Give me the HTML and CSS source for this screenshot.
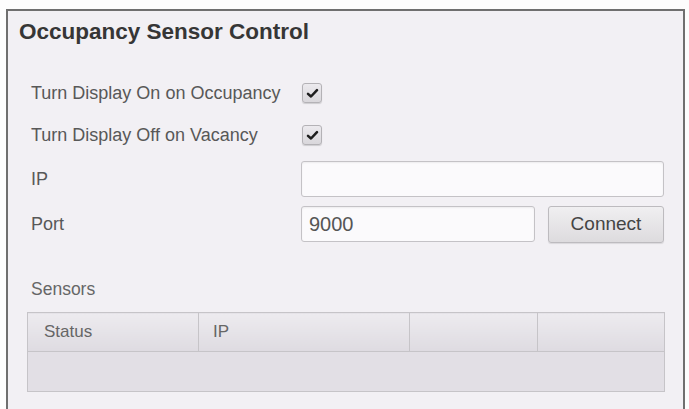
FILE: index.html
```html
<!DOCTYPE html>
<html lang="en">
<head>
    <meta charset="UTF-8">
    <title>Occupancy Sensor Control</title>
    <link rel="stylesheet" href="styles.css">
</head>
<body>
    <div class="panel">
        <h2 class="panel-title">Occupancy Sensor Control</h2>

        <div class="form">
            <div class="row row-check">
                <label class="label">Turn Display On on Occupancy</label>
                <span class="checkbox checked">
                    <svg viewBox="0 0 20 20" width="15" height="15"><path d="M4 10.5 L8 14 L16 5.5" fill="none" stroke="#1e1e1e" stroke-width="3.4" stroke-linecap="round" stroke-linejoin="round"/></svg>
                </span>
            </div>
            <div class="row row-check">
                <label class="label">Turn Display Off on Vacancy</label>
                <span class="checkbox checked">
                    <svg viewBox="0 0 20 20" width="15" height="15"><path d="M4 10.5 L8 14 L16 5.5" fill="none" stroke="#1e1e1e" stroke-width="3.4" stroke-linecap="round" stroke-linejoin="round"/></svg>
                </span>
            </div>
            <div class="row row-ip">
                <label class="label">IP</label>
                <input class="field field-ip" type="text" value="">
            </div>
            <div class="row row-port">
                <label class="label">Port</label>
                <input class="field field-port" type="text" value="9000">
                <button class="btn">Connect</button>
            </div>
        </div>

        <div class="sensors">
            <div class="sensors-label">Sensors</div>
            <table class="grid">
                <thead>
                    <tr>
                        <th class="col-status">Status</th>
                        <th class="col-ip">IP</th>
                        <th class="col-a"></th>
                        <th class="col-b"></th>
                    </tr>
                </thead>
                <tbody>
                    <tr>
                        <td colspan="4"></td>
                    </tr>
                </tbody>
            </table>
        </div>
    </div>
</body>
</html>
```

FILE: styles.css
```css
html, body {
    margin: 0;
    height: 100%;
    overflow: hidden;
}
body {
    background: #fdfdfd;
    font-family: "Liberation Sans", Arial, sans-serif;
    padding: 9px 0 0 6px;
    box-sizing: border-box;
}
.panel {
    width: 679px;
    height: 430px;
    box-sizing: border-box;
    border: 2px solid #6f6f6f;
    border-bottom: none;
    background: #f2f0f4;
}
.panel-title {
    margin: 0;
    padding: 8px 11px 0;
    height: 61px;
    box-sizing: border-box;
    font-size: 22.5px;
    line-height: 26px;
    font-weight: bold;
    color: #363636;
}
.form {
    padding: 0 19px 0 23px;
}
.row {
    display: flex;
    align-items: center;
}
.row-check {
    height: 42px;
}
.row-ip {
    margin-top: 5px;
    height: 36px;
}
.row-port {
    margin-top: 9px;
    height: 36px;
}
.label {
    width: 270px;
    flex: none;
    font-size: 18px;
    color: #585858;
}
.checkbox {
    width: 20px;
    height: 20px;
    margin-left: 1px;
    box-sizing: border-box;
    border: 1px solid #b4b2b6;
    border-radius: 3px;
    background: linear-gradient(#eceaee, #d9d7db);
    box-shadow: 0 1px 1px rgba(0,0,0,0.15);
    display: flex;
    align-items: center;
    justify-content: center;
}
.field {
    box-sizing: border-box;
    height: 36px;
    border: 1px solid #c4c2c6;
    border-radius: 3px;
    background: #fbfafc;
    box-shadow: inset 0 1px 2px rgba(0,0,0,0.06);
    font-family: inherit;
    font-size: 20px;
    color: #555;
    padding: 0 7px;
    margin: 0;
}
.field-ip {
    width: 363px;
}
.field-port {
    width: 234px;
}
.btn {
    box-sizing: border-box;
    width: 116px;
    height: 37px;
    margin-left: 13px;
    border: 1px solid #bdbbbf;
    border-radius: 3px;
    background: linear-gradient(#f0eff1, #dddbde);
    box-shadow: 0 1px 1px rgba(0,0,0,0.1);
    font-family: inherit;
    font-size: 19px;
    color: #444;
    padding: 0;
}
.sensors {
    padding: 0 18px 0 19px;
    margin-top: 37px;
}
.sensors-label {
    font-size: 17.5px;
    line-height: 20px;
    color: #666;
    padding-left: 4px;
    height: 33px;
}
.grid {
    width: 638px;
    border-collapse: collapse;
    table-layout: fixed;
}
.grid th {
    height: 39px;
    box-sizing: border-box;
    border: 1px solid #c6c4c8;
    background: linear-gradient(#edebef, #dedbe1);
    text-align: left;
    font-weight: normal;
    font-size: 17px;
    color: #666;
    padding: 0 14px;
}
.grid .col-status { width: 171px; padding-left: 16px; }
.grid .col-ip { width: 211px; }
.grid .col-a { width: 128px; }
.grid td {
    height: 39px;
    border: 1px solid #c6c4c8;
    background: #e2dfe5;
    padding: 0;
}
```
